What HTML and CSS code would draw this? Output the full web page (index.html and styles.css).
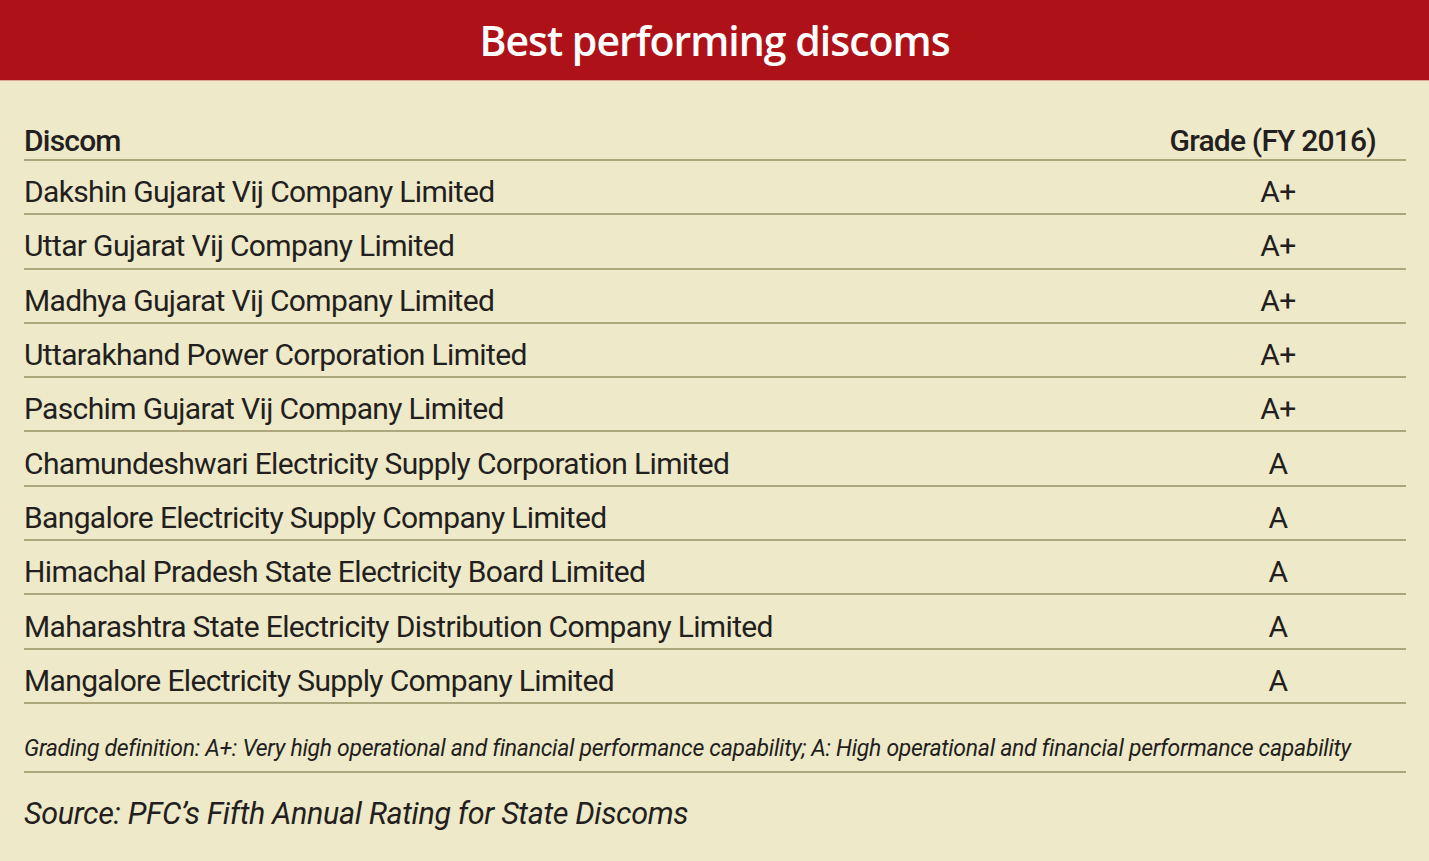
FILE: index.html
```html
<!DOCTYPE html>
<html lang="en">
<head>
<meta charset="utf-8">
<title>Best performing discoms</title>
<link rel="stylesheet" href="styles.css">
</head>
<body>
<div class="page">
  <header class="banner">
    <h1 class="banner-title">Best performing discoms</h1>
  </header>
  <main class="content">
    <div class="table">
      <div class="row head">
        <div class="cell name">Discom</div>
        <div class="cell grade grade-head">Grade (FY 2016)</div>
      </div>
      <div class="row"><div class="cell name">Dakshin Gujarat Vij Company Limited</div><div class="cell grade">A+</div></div>
      <div class="row"><div class="cell name">Uttar Gujarat Vij Company Limited</div><div class="cell grade">A+</div></div>
      <div class="row"><div class="cell name">Madhya Gujarat Vij Company Limited</div><div class="cell grade">A+</div></div>
      <div class="row"><div class="cell name">Uttarakhand Power Corporation Limited</div><div class="cell grade">A+</div></div>
      <div class="row"><div class="cell name">Paschim Gujarat Vij Company Limited</div><div class="cell grade">A+</div></div>
      <div class="row"><div class="cell name">Chamundeshwari Electricity Supply Corporation Limited</div><div class="cell grade">A</div></div>
      <div class="row"><div class="cell name">Bangalore Electricity Supply Company Limited</div><div class="cell grade">A</div></div>
      <div class="row"><div class="cell name">Himachal Pradesh State Electricity Board Limited</div><div class="cell grade">A</div></div>
      <div class="row"><div class="cell name">Maharashtra State Electricity Distribution Company Limited</div><div class="cell grade">A</div></div>
      <div class="row"><div class="cell name">Mangalore Electricity Supply Company Limited</div><div class="cell grade">A</div></div>
    </div>
    <p class="note">Grading definition: A+: Very high operational and financial performance capability; A: High operational and financial performance capability</p>
    <p class="source">Source: PFC’s Fifth Annual Rating for State Discoms</p>
  </main>
</div>
</body>
</html>
```

FILE: styles.css
```css
html, body {
  margin: 0;
  padding: 0;
  background: #eee9c8;
}
body {
  font-family: Roboto, "Liberation Sans", Arial, sans-serif;
  color: #231f20;
}
.page {
  width: 1429px;
  min-height: 861px;
  background: #eee9c8;
}
.banner {
  height: 81px;
  background: #af1118;
  display: flex;
  align-items: center;
  justify-content: center;
  border-bottom: 1px solid #d9a89a;
  box-sizing: border-box;
}
.banner-title {
  margin: 0;
  color: #ffffff;
  font-family: "Open Sans", sans-serif;
  font-weight: 600;
  font-size: 41px;
  letter-spacing: -1px;
  line-height: 1;
  padding-top: 1px;
}
.content {
  padding: 36px 23px 0 24px;
}
.table {
  display: flex;
  flex-direction: column;
}
.row {
  display: flex;
  align-items: center;
  height: 54.3px;
  border-bottom: 2px solid #aca77c;
  box-sizing: border-box;
  font-size: 30px;
  letter-spacing: -0.65px;
}
.row.head {
  height: 44px;
  font-weight: 500;
  letter-spacing: -0.8px;
}
.cell {
  padding-top: 9px;
}
.row.head .cell {
  padding-top: 4px;
}
.cell.name {
  flex: 1;
}
.cell.grade {
  width: 256px;
  text-align: center;
}
.cell.grade-head {
  text-align: right;
  padding-right: 30px;
  box-sizing: border-box;
}
.note {
  margin: 0;
  padding: 31px 0 9px;
  font-style: italic;
  font-size: 23px;
  letter-spacing: -0.3px;
  border-bottom: 2px solid #aca77c;
}
.source {
  margin: 0;
  padding-top: 23px;
  font-style: italic;
  font-size: 30.5px;
  letter-spacing: -0.35px;
}
```
